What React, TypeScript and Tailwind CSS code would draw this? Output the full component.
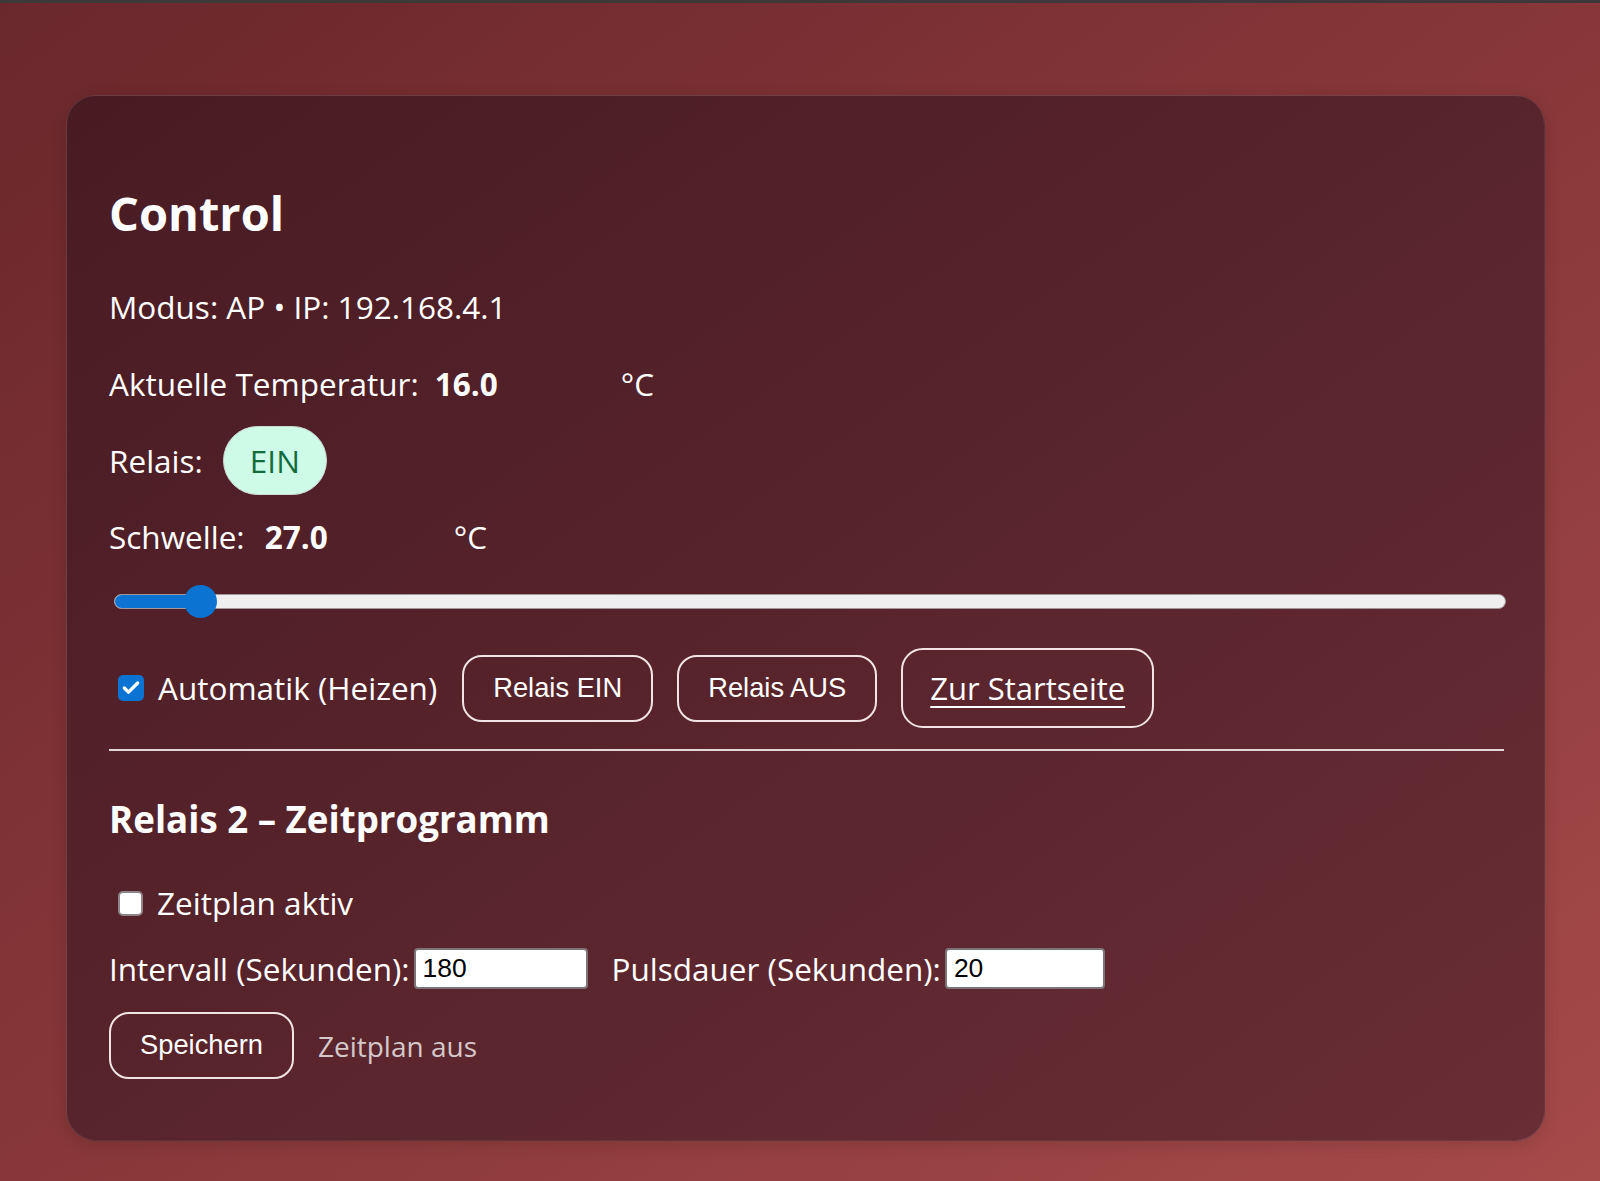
import React from 'react';
import { Check } from 'lucide-react';

const Box: React.FC<{ checked?: boolean }> = ({ checked }) =>
  checked ? (
    <span className="flex h-[26px] w-[26px] items-center justify-center rounded-[5px] bg-[#0b74d2]">
      <Check className="h-[20px] w-[20px] text-white" strokeWidth={4} />
    </span>
  ) : (
    <span className="block h-[25px] w-[25px] rounded-[5px] border-2 border-[#8d8587] bg-white" />
  );

const Btn: React.FC<{ children: React.ReactNode }> = ({ children }) => (
  <button className="h-[67px] rounded-[20px] border-2 border-[#f1e4e5] px-[29px] font-['Liberation_Sans',Arial,sans-serif] text-[27.3px] text-white">
    {children}
  </button>
);

const App: React.FC = () => {
  return (
    <div className="min-h-screen w-full bg-gradient-to-br from-[#6a272c] via-[#873739] to-[#a64a4a] font-['Open_Sans',sans-serif] text-white">
      <div className="h-[3px] bg-[#3d3839]" />
      <div className="pl-[66px] pr-[55px] pt-[92px] pb-[40px]">
        <div className="rounded-[30px] border border-white/10 bg-gradient-to-br from-[#481b23] to-[#692d35] pl-[42px] pr-[40px] pt-[89px] pb-[61px] shadow-[0_4px_16px_rgba(0,0,0,0.12)]">
          {/* Kopf */}
          <h2 className="text-[47px] font-bold leading-[56px]">Control</h2>
          <p className="mt-[46px] text-[31.5px] leading-[40px]">Modus: AP • IP: 192.168.4.1</p>

          <div className="mt-[37px] flex text-[31.5px] leading-[40px]">
            <span>Aktuelle Temperatur:</span>
            <span className="ml-[16px] inline-block w-[186px] font-bold">16.0</span>
            <span>°C</span>
          </div>

          <div className="mt-[22px] flex h-[69px] items-center text-[31.5px] leading-[40px]">
            <span>Relais:</span>
            <span className="ml-[20px] flex h-[69px] items-center rounded-full border border-[#cfd8d4] bg-[#cdfbe8] px-[26px] text-[#146c3c]">
              EIN
            </span>
          </div>

          <div className="mt-[22px] flex text-[31.5px] leading-[40px]">
            <span>Schwelle:</span>
            <span className="ml-[20px] inline-block w-[189px] font-bold">27.0</span>
            <span>°C</span>
          </div>

          {/* Schwelle Regler */}
          <div className="relative -mr-[2px] ml-[5px] mt-[28px] flex h-[33px] items-center">
            <div className="h-[15px] w-full overflow-hidden rounded-full border border-[#a3979a] bg-[#efefef]">
              <div className="h-full w-[90px] bg-[#0b74d2]" />
            </div>
            <div className="absolute left-[70px] top-0 h-[33px] w-[33px] rounded-full bg-[#0b74d2]" />
          </div>

          <div className="mt-[30px] flex h-[80px] items-center">
            <span className="ml-[9px]">
              <Box checked />
            </span>
            <span className="ml-[14px] text-[31.5px] leading-[40px]">Automatik (Heizen)</span>
            <div className="ml-[25px] flex items-center gap-[24px]">
              <Btn>Relais EIN</Btn>
              <Btn>Relais AUS</Btn>
              <a
                href="#"
                className="flex h-[80px] items-center rounded-[22px] border-2 border-[#f1e4e5] px-[27px] text-[31px] text-white underline decoration-2 underline-offset-[6px]"
              >
                Zur Startseite
              </a>
            </div>
          </div>

          <div className="mt-[21px] h-[2px] bg-[#e2d6d8]" />

          {/* Relais 2 */}
          <h3 className="mt-[46px] text-[36.7px] font-bold leading-[44px]">Relais 2 – Zeitprogramm</h3>

          <div className="mt-[42px] flex items-center text-[31.5px] leading-[40px]">
            <span className="ml-[9px]">
              <Box />
            </span>
            <span className="ml-[14px]">Zeitplan aktiv</span>
          </div>

          <div className="mt-[25px] flex h-[41px] items-center text-[31.5px] leading-[40px]">
            <span>Intervall (Sekunden):</span>
            <input
              defaultValue="180"
              className="ml-[4px] h-[41px] w-[174px] rounded-[4px] border-2 border-[#7b7577] bg-white px-[7px] font-['Liberation_Sans',Arial,sans-serif] text-[26.5px] text-black outline-none"
            />
            <span className="ml-[24px]">Pulsdauer (Sekunden):</span>
            <input
              defaultValue="20"
              className="ml-[4px] h-[41px] w-[160px] rounded-[4px] border-2 border-[#7b7577] bg-white px-[7px] font-['Liberation_Sans',Arial,sans-serif] text-[26.5px] text-black outline-none"
            />
          </div>

          <div className="mt-[23px] flex items-center">
            <Btn>Speichern</Btn>
            <span className="ml-[24px] text-[28px] leading-[40px] text-white/75">Zeitplan aus</span>
          </div>
        </div>
      </div>
    </div>
  );
};

export default App;
